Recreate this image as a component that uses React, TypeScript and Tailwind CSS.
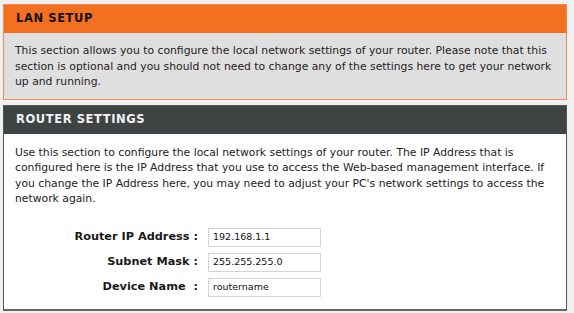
import React from 'react';

const fields = [
  { label: 'Router IP Address :', value: '192.168.1.1' },
  { label: 'Subnet Mask :', value: '255.255.255.0' },
  { label: 'Device Name  :', value: 'routername' },
];

export default function App() {
  return (
    <div className="w-[574px] h-[313px] bg-[#f0f0f0] pt-[4px] pl-[3px] pr-[7px] font-['DejaVu_Sans',Verdana,sans-serif] text-[#222]">
      {/* LAN setup */}
      <div className="border border-[#f58a4c] bg-[#dfdfdf]">
        <div className="h-[28px] bg-[#f37021] flex items-center px-[12px]">
          <span className="text-[11.5px] font-bold tracking-[0.6px] text-[#111]">LAN SETUP</span>
        </div>
        <p className="px-[11px] pt-[10px] pb-[9px] text-[10.8px] leading-[15.5px] whitespace-nowrap">
          This section allows you to configure the local network settings of your router. Please note that this<br />
          section is optional and you should not need to change any of the settings here to get your network<br />
          up and running.
        </p>
      </div>

      {/* Router settings */}
      <div className="mt-[5px] border border-[#555] border-b-2 border-b-[#666] bg-white">
        <div className="h-[28px] bg-[#404343] flex items-center px-[12px]">
          <span className="text-[11.5px] font-bold tracking-[0.6px] text-[#f2f2f2]">ROUTER SETTINGS</span>
        </div>
        <p className="px-[11px] pt-[11px] text-[10.8px] leading-[15.5px] whitespace-nowrap">
          Use this section to configure the local network settings of your router. The IP Address that is<br />
          configured here is the IP Address that you use to access the Web-based management interface. If<br />
          you change the IP Address here, you may need to adjust your PC's network settings to access the<br />
          network again.
        </p>
        <div className="mt-[21px] pb-[12px] flex flex-col gap-[6px]">
          {fields.map((f) => (
            <div key={f.label} className="flex items-center">
              <span className="w-[194px] text-right text-[11.3px] font-bold text-[#1a1a1a] whitespace-pre">{f.label}</span>
              <div className="ml-[10px] w-[113px] h-[19px] border border-[#d4d4d4] bg-white flex items-center px-[4px] text-[9.5px] text-[#111]">
                {f.value}
              </div>
            </div>
          ))}
        </div>
      </div>
    </div>
  );
}
